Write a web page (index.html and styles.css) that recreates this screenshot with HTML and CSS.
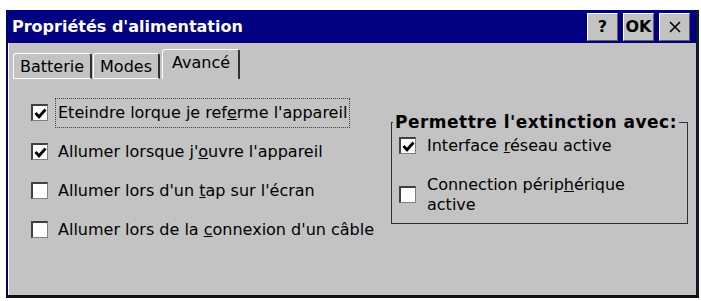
FILE: index.html
```html
<!DOCTYPE html>
<html lang="fr">
<head>
<meta charset="utf-8">
<link rel="stylesheet" href="styles.css">
</head>
<body>
<div class="window">
  <div class="titlebar">
    <span class="title">Propriétés d'alimentation</span>
    <div class="tbtns">
      <span class="tbtn help">?</span>
      <span class="tbtn ok">OK</span>
      <span class="tbtn close">
        <svg width="14" height="14" viewBox="0 0 14 14"><path d="M2 2L12 12M12 2L2 12" stroke="#000" stroke-width="1.6" fill="none"/></svg>
      </span>
    </div>
  </div>
  <div class="tabs">
    <span class="tab">Batterie</span>
    <span class="tab">Modes</span>
    <span class="tab active">Avancé</span>
  </div>
  <div class="panel">
    <div class="col-left">
      <div class="row"><span class="cb checked"><svg viewBox="0 0 13 13" width="13" height="13"><path d="M1.5 6L5 9.8L11.5 2.5" stroke="#000" stroke-width="2.8" fill="none"/></svg></span><span class="lbl focus">Eteindre lorque je ref<u>e</u>rme l'appareil</span></div>
      <div class="row"><span class="cb checked"><svg viewBox="0 0 13 13" width="13" height="13"><path d="M1.5 6L5 9.8L11.5 2.5" stroke="#000" stroke-width="2.8" fill="none"/></svg></span><span class="lbl">Allumer lorsque j'<u>o</u>uvre l'appareil</span></div>
      <div class="row"><span class="cb"></span><span class="lbl">Allumer lors d'un <u>t</u>ap sur l'écran</span></div>
      <div class="row"><span class="cb"></span><span class="lbl">Allumer lors de la <u>c</u>onnexion d'un câble</span></div>
    </div>
    <div class="group">
      <span class="legend">Permettre l'extinction avec:</span>
      <div class="grow"><span class="cb checked"><svg viewBox="0 0 13 13" width="13" height="13"><path d="M1.5 6L5 9.8L11.5 2.5" stroke="#000" stroke-width="2.8" fill="none"/></svg></span><span class="lbl">Interface <u>r</u>éseau active</span></div>
      <div class="grow two"><span class="cb"></span><span class="lbl">Connection périp<u>h</u>érique<br>active</span></div>
    </div>
  </div>
</div>
</body>
</html>
```

FILE: styles.css
```css
html, body {
  margin: 0;
  padding: 0;
  background: #ffffff;
}
body {
  font-family: "DejaVu Sans", sans-serif;
  font-size: 16px;
  color: #000;
}
.window {
  margin: 10px 0 0 6px;
  width: 693px;
  height: 288px;
  box-sizing: border-box;
  border-left: 2px solid #000060;
  border-right: 3px solid #10182a;
  border-bottom: 3px solid #101010;
  background: #c3c3c3;
  display: flex;
  flex-direction: column;
}
.titlebar {
  height: 33px;
  background: #000080;
  display: flex;
  align-items: center;
  padding-left: 4px;
  padding-right: 6px;
  flex: none;
}
.title {
  color: #fff;
  font-weight: bold;
  font-size: 16px;
  flex: 1;
}
.tbtns {
  display: flex;
  gap: 5px;
}
.tbtn {
  width: 31px;
  height: 28px;
  box-sizing: border-box;
  background: #c3c3c3;
  border-top: 1px solid #fff;
  border-left: 1px solid #fff;
  border-right: 1px solid #606060;
  border-bottom: 1px solid #606060;
  display: flex;
  align-items: center;
  justify-content: center;
  font-weight: bold;
  font-size: 16px;
}
.tabs {
  height: 36px;
  display: flex;
  align-items: flex-end;
  padding-left: 4px;
  flex: none;
  border-left: 1px solid #fff;
}
.tab {
  height: 26px;
  box-sizing: border-box;
  padding: 0 6px;
  border-top: 1px solid #fff;
  border-left: 1px solid #fff;
  border-right: 2px solid #303030;
  border-radius: 3px 3px 0 0;
  display: flex;
  align-items: center;
  margin-right: 1px;
  border-bottom: 1px solid #fff;
}
.tab.active {
  height: 30px;
  padding: 0 8px 4px 9px;
  border-bottom: none;
  margin-left: 1px;
}
.panel {
  flex: 1;
  display: flex;
  border-left: 1px solid #fff;
  padding: 25px 0 0 22px;
}
.col-left {
  width: 352px;
  display: flex;
  flex-direction: column;
  gap: 22px;
}
.row {
  display: flex;
  align-items: center;
  height: 17px;
}
.cb {
  width: 17px;
  height: 17px;
  box-sizing: border-box;
  background: #fff;
  border-top: 2px solid #404040;
  border-left: 2px solid #404040;
  border-right: 1px solid #808080;
  border-bottom: 1px solid #808080;
  flex: none;
  display: flex;
  align-items: center;
  justify-content: center;
}
.cb svg {
  display: block;
}
.lbl {
  margin-left: 10px;
  line-height: 18px;
}
.lbl.focus {
  margin-left: 8px;
  padding: 5px 2px;
  outline: 1px dotted #444;
}
.group {
  margin-top: 18px;
  margin-left: 8px;
  width: 297px;
  height: 102px;
  box-sizing: border-box;
  border: 1px solid #303030;
  position: relative;
  padding: 14px 0 0 7px;
  display: flex;
  flex-direction: column;
  gap: 32px;
}
.legend {
  position: absolute;
  left: 1px;
  top: -11px;
  background: #c3c3c3;
  font-weight: bold;
  font-size: 17px;
  letter-spacing: 0.5px;
  padding: 0 2px 0 2px;
  line-height: 20px;
}
.grow {
  display: flex;
  align-items: center;
  height: 17px;
}
.grow .lbl {
  margin-left: 11px;
}
.grow.two .lbl {
  line-height: 20px;
}
```
